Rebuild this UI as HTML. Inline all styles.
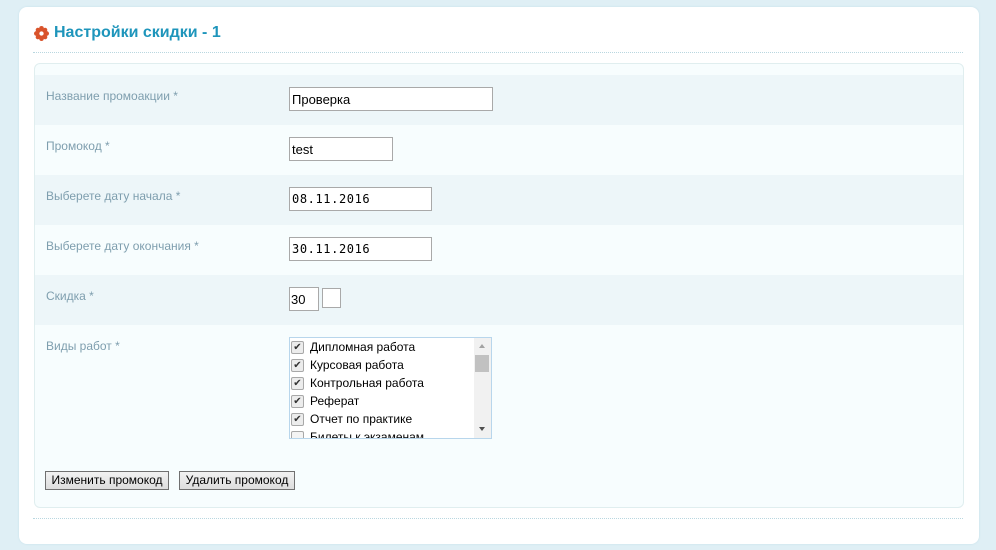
<!DOCTYPE html>
<html><head><meta charset="utf-8"><style>
*{margin:0;padding:0;box-sizing:border-box}
body{width:996px;height:550px;background:#dfeff5;font-family:"Liberation Sans",Arial,sans-serif;position:relative;overflow:hidden}
.panel{position:absolute;left:19px;top:7px;width:960px;height:537px;background:#fff;border-radius:8px;box-shadow:0 0 2px #c5e1ea}
.title{position:absolute;left:34px;top:24px;font-size:16px;font-weight:bold;color:#1e95bb;display:flex;align-items:center}
.title svg{margin-right:5px}
.dl{position:absolute;left:33px;width:930px;border-top:1px dotted #b9d7e0}
.inner{position:absolute;left:34px;top:63px;width:930px;height:445px;background:#f7fdfe;border:1px solid #e0eeef;border-radius:6px;overflow:hidden}
.row{position:absolute;left:0;width:100%;height:50px}
.row.s{background:#edf6f9}
.lab{position:absolute;left:11px;top:25px;font-size:12px;color:#7e9eae}
input.t{position:absolute;left:254px;height:24px;border:1px solid #a9a9a9;font:13px "Liberation Sans",sans-serif;padding-left:2px;background:#fff;color:#000}
.mono{font:12px "DejaVu Sans Mono",monospace!important;letter-spacing:0.6px}
.list{position:absolute;left:254px;top:273px;width:203px;height:102px;border:1px solid #b8d6ec;background:#fff;overflow:hidden}
.it{height:18px;display:flex;align-items:center;font-size:12px;color:#000;padding-left:1px;white-space:nowrap}
.cb{width:13px;height:13px;border:1px solid #a8a8a8;background:#ececec;margin-right:6px;border-radius:2px;font-size:10px;line-height:11px;text-align:center;color:#333}
.sb{position:absolute;right:0;top:0;width:17px;height:100%;background:#f1f1f1}
.btn{position:absolute;top:471px;height:19px;font:12px "Liberation Sans",sans-serif;border:1px solid #707070;background:linear-gradient(#f2f2f2,#dddddd);color:#000;line-height:17px;white-space:nowrap;text-align:center}
</style></head><body>
<div class="panel"></div>
<div class="title"><svg width="15" height="15" viewBox="0 0 16 16"><g fill="#d9532b"><circle cx="8" cy="8" r="5.5"/><circle cx="8" cy="2.5" r="2.5"/><circle cx="8" cy="13.5" r="2.5"/><circle cx="2.5" cy="8" r="2.5"/><circle cx="13.5" cy="8" r="2.5"/><circle cx="4.1" cy="4.1" r="2.3"/><circle cx="11.9" cy="4.1" r="2.3"/><circle cx="4.1" cy="11.9" r="2.3"/><circle cx="11.9" cy="11.9" r="2.3"/></g><circle cx="8" cy="8" r="2.3" fill="#fff"/></svg>Настройки скидки - 1</div>
<div class="dl" style="top:52px"></div>
<div class="inner">
<div class="row s" style="top:11px"><div class="lab" style="top:14px">Название промоакции *</div></div>
<input class="t" style="top:23px;width:204px" value="Проверка">
<div class="row" style="top:61px"><div class="lab" style="top:14px">Промокод *</div></div>
<input class="t" style="top:73px;width:104px" value="test">
<div class="row s" style="top:111px"><div class="lab" style="top:14px">Выберете дату начала *</div></div>
<input class="t mono" style="top:123px;width:143px" value="08.11.2016">
<div class="row" style="top:161px"><div class="lab" style="top:14px">Выберете дату окончания *</div></div>
<input class="t mono" style="top:173px;width:143px" value="30.11.2016">
<div class="row s" style="top:211px"><div class="lab" style="top:14px">Скидка *</div></div>
<input class="t" style="top:223px;width:30px;padding-left:1px" value="30">
<div style="position:absolute;left:287px;top:224px;width:19px;height:20px;border:1px solid #a9a9a9;background:#fff"></div>
<div class="lab" style="top:275px">Виды работ *</div>
<div class="list">
<div class="it"><span class="cb">✔</span>Дипломная работа</div>
<div class="it"><span class="cb">✔</span>Курсовая работа</div>
<div class="it"><span class="cb">✔</span>Контрольная работа</div>
<div class="it"><span class="cb">✔</span>Реферат</div>
<div class="it"><span class="cb">✔</span>Отчет по практике</div>
<div class="it"><span class="cb" style="background:#f4f4f4"></span>Билеты к экзаменам</div>
<div class="sb"><div style="position:absolute;left:5px;top:6px;border:3px solid transparent;border-bottom:4px solid #a3a3a3;border-top:0"></div><div style="position:absolute;left:1px;top:17px;width:14px;height:17px;background:#c1c1c1"></div><div style="position:absolute;left:5px;bottom:7px;border:3px solid transparent;border-top:4px solid #505050;border-bottom:0"></div></div>
</div>
</div>
<div class="btn" style="left:45px;width:124px">Изменить промокод</div>
<div class="btn" style="left:179px;width:116px">Удалить промокод</div>
<div class="dl" style="top:518px"></div>
</body></html>
